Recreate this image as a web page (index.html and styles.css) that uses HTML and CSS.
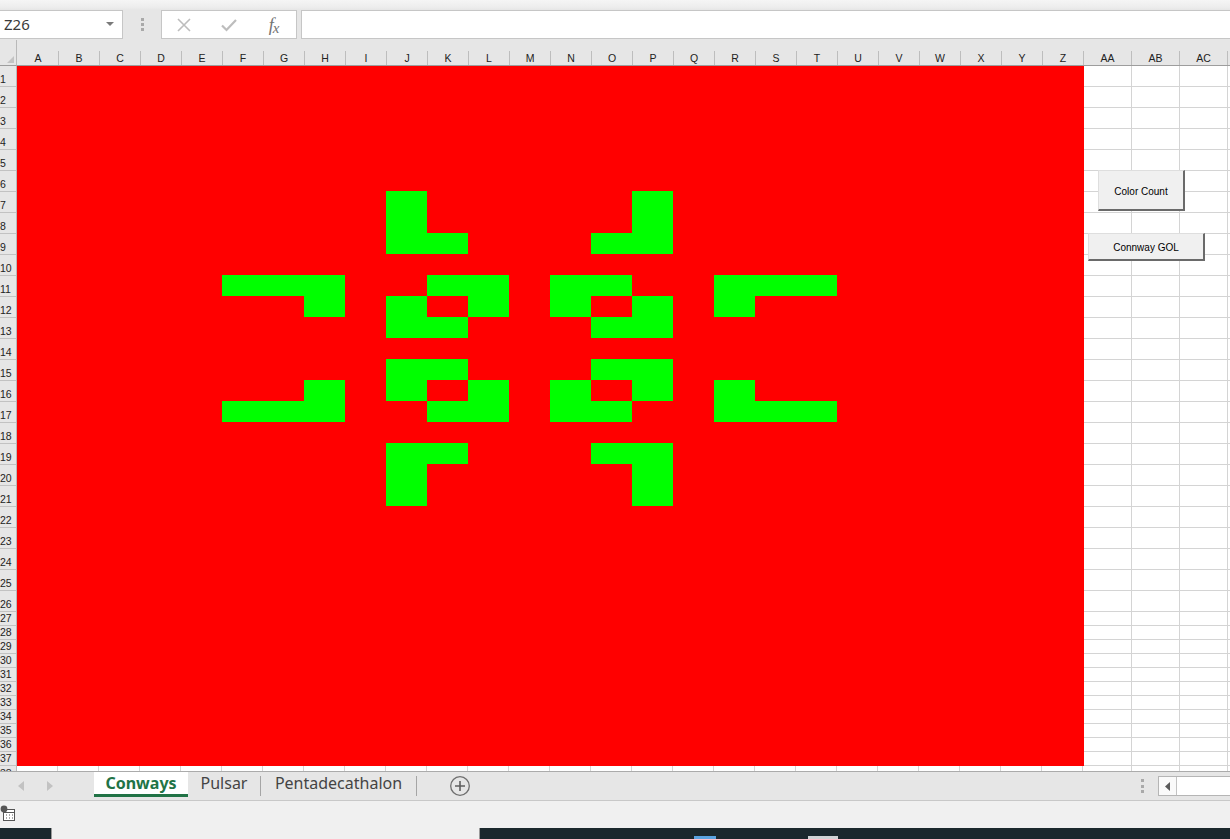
FILE: index.html
```html
<!DOCTYPE html>
<html lang="en">
<head>
<meta charset="utf-8">
<title>Conways - Excel</title>
<link rel="stylesheet" href="styles.css">
</head>
<body>
<div class="app">
  <header class="topbar">
    <div class="namebox">
      <span class="name">Z26</span>
      <svg class="dd" width="8" height="5" viewBox="0 0 8 5"><polygon points="0,0 8,0 4,4" fill="#7a7a7a"/></svg>
    </div>
    <div class="grip"><i></i><i></i><i></i></div>
    <div class="fnbox">
      <span class="fnicon"><svg width="16" height="16" viewBox="0 0 16 16"><path d="M2 2 L14 14 M14 2 L2 14" stroke="#bdbdbd" stroke-width="1.6" fill="none"/></svg></span>
      <span class="fnicon"><svg width="18" height="16" viewBox="0 0 18 16"><path d="M2 8.5 L6.5 13 L16 3" stroke="#bdbdbd" stroke-width="2.2" fill="none"/></svg></span>
      <span class="fnicon"><span class="fx">f<span class="fxx">x</span></span></span>
    </div>
    <div class="formula"></div>
  </header>

  <section class="sheet">
    <div class="corner"><svg width="8" height="8" viewBox="0 0 8 8"><polygon points="7,0 7,7 0,7" fill="#c3c3c3"/></svg></div>
    <div class="colheads">
      <div class="ch">A</div><div class="ch">B</div><div class="ch">C</div><div class="ch">D</div><div class="ch">E</div>
      <div class="ch">F</div><div class="ch">G</div><div class="ch">H</div><div class="ch">I</div><div class="ch">J</div>
      <div class="ch">K</div><div class="ch">L</div><div class="ch">M</div><div class="ch">N</div><div class="ch">O</div>
      <div class="ch">P</div><div class="ch">Q</div><div class="ch">R</div><div class="ch">S</div><div class="ch">T</div>
      <div class="ch">U</div><div class="ch">V</div><div class="ch">W</div><div class="ch">X</div><div class="ch">Y</div>
      <div class="ch">Z</div><div class="ch">AA</div><div class="ch">AB</div><div class="ch">AC</div><div class="ch last"></div>
    </div>
    <div class="rowheads">
      <div class="rh">1</div><div class="rh">2</div><div class="rh">3</div><div class="rh">4</div><div class="rh">5</div>
      <div class="rh">6</div><div class="rh">7</div><div class="rh">8</div><div class="rh">9</div><div class="rh">10</div>
      <div class="rh">11</div><div class="rh">12</div><div class="rh">13</div><div class="rh">14</div><div class="rh">15</div>
      <div class="rh">16</div><div class="rh">17</div><div class="rh">18</div><div class="rh">19</div><div class="rh">20</div>
      <div class="rh">21</div><div class="rh">22</div><div class="rh">23</div><div class="rh">24</div><div class="rh">25</div>
      <div class="rh">26</div><div class="rh sm">27</div><div class="rh sm">28</div><div class="rh sm">29</div><div class="rh sm">30</div>
      <div class="rh sm">31</div><div class="rh sm">32</div><div class="rh sm">33</div><div class="rh sm">34</div><div class="rh sm">35</div>
      <div class="rh sm">36</div><div class="rh sm">37</div><div class="rh sm top">38</div>
    </div>
    <div class="body">
      <div class="red">
        <div class="g g1"></div><div class="g g2"></div><div class="g g3"></div><div class="g g4"></div>
        <div class="g g5"></div><div class="g g6"></div><div class="g g7"></div><div class="g g8"></div>
        <div class="g g9"></div><div class="g g10"></div><div class="g g11"></div><div class="g g12"></div>
        <div class="g g13"></div><div class="g g14"></div><div class="g g15"></div><div class="g g16"></div>
        <div class="g g17"></div><div class="g g18"></div><div class="g g19"></div><div class="g g20"></div>
        <div class="g g21"></div><div class="g g22"></div><div class="g g23"></div><div class="g g24"></div>
        <div class="g g25"></div><div class="g g26"></div><div class="g g27"></div><div class="g g28"></div>
        <div class="g g29"></div><div class="g g30"></div><div class="g g31"></div><div class="g g32"></div>
      </div>
      <div class="white-top"></div>
      <div class="white-bottom"></div>
      <div class="strip"></div>
    </div>
    <button class="xlbtn btn-count">Color Count</button>
    <button class="xlbtn btn-gol">Connway GOL</button>
  </section>

  <footer class="tabbar">
    <div class="nav">
      <svg width="6" height="10" viewBox="0 0 6 10"><polygon points="6,0 6,10 0,5" fill="#c2c2c2"/></svg>
      <svg width="6" height="10" viewBox="0 0 6 10"><polygon points="0,0 0,10 6,5" fill="#c2c2c2"/></svg>
    </div>
    <div class="tab active">Conways</div>
    <div class="tab t-pulsar">Pulsar</div>
    <div class="tsep"></div>
    <div class="tab t-penta">Pentadecathalon</div>
    <div class="tsep"></div>
    <div class="addsheet">
      <svg width="22" height="22" viewBox="0 0 22 22"><circle cx="11" cy="11" r="9.3" fill="none" stroke="#6f6f6f" stroke-width="1.3"/><path d="M11 6 V16 M6 11 H16" stroke="#5f5f5f" stroke-width="1.6"/></svg>
    </div>
    <div class="spacer"></div>
    <div class="rgrip"><i></i><i></i><i></i></div>
    <div class="hscroll">
      <div class="hbtn"><svg width="5" height="9" viewBox="0 0 5 9"><polygon points="5,0 5,9 0,4.5" fill="#5a5a5a"/></svg></div>
      <div class="htrack"></div>
    </div>
  </footer>

  <div class="statusbar">
    <svg class="macro" width="16" height="17" viewBox="0 0 16 17">
      <rect x="3.5" y="4.5" width="11" height="11" fill="#fff" stroke="#555"/>
      <path d="M3.5 7.5 H14.5" stroke="#555"/>
      <path d="M6 10 h1 M9 10 h1 M12 10 h1 M6 13 h1 M9 13 h1 M12 13 h1" stroke="#555"/>
      <circle cx="4" cy="4" r="3.4" fill="#555"/>
    </svg>
  </div>

  <div class="taskbar">
    <div class="search"></div>
    <div class="tb-a"></div>
    <div class="tb-b"></div>
  </div>
</div>
</body>
</html>
```

FILE: styles.css
```css
html, body {
  margin: 0;
  padding: 0;
}

body {
  width: 1230px;
  height: 839px;
  overflow: hidden;
  background: #e6e6e6;
  font-family: "Noto Sans", "Open Sans", sans-serif;
}

.app {
  display: flex;
  flex-direction: column;
  width: 1230px;
  height: 839px;
}

/* ---------- formula bar ---------- */
.topbar {
  height: 40px;
  box-sizing: border-box;
  padding-top: 10px;
  display: flex;
  align-items: flex-start;
  background: linear-gradient(#f5f5f5 0, #ededed 7px, #e6e6e6 10px);
  flex: none;
}

.namebox {
  width: 123px;
  height: 29px;
  box-sizing: border-box;
  border: 1px solid #c6c6c6;
  border-left: none;
  background: #fff;
  display: flex;
  align-items: center;
  justify-content: space-between;
  padding: 0 8px 0 4px;
}

.name {
  font-size: 15px;
  color: #3a3a3a;
  line-height: 1;
}

.dd {
  display: block;
}

.grip {
  width: 38px;
  height: 29px;
  display: flex;
  flex-direction: column;
  align-items: center;
  justify-content: center;
  gap: 2px;
}

.grip i, .rgrip i {
  display: block;
  width: 3px;
  height: 3px;
  background: #a9a9a9;
}

.fnbox {
  width: 136px;
  height: 29px;
  box-sizing: border-box;
  border: 1px solid #c6c6c6;
  background: #fff;
  display: flex;
  align-items: center;
}

.fnicon {
  width: 45px;
  height: 27px;
  display: flex;
  align-items: center;
  justify-content: center;
}

.fnicon svg {
  display: block;
}

.fx {
  font-family: "Liberation Serif", "DejaVu Serif", serif;
  font-style: italic;
  font-size: 18px;
  color: #737373;
  line-height: 1;
  letter-spacing: -1px;
}

.fxx {
  font-size: 15px;
  position: relative;
  top: 2px;
}

.formula {
  flex: 1;
  margin-left: 4px;
  height: 29px;
  box-sizing: border-box;
  border: 1px solid #c6c6c6;
  border-right: none;
  background: #fff;
}

/* ---------- sheet ---------- */
.sheet {
  position: relative;
  height: 731px;
  flex: none;
  overflow: hidden;
  display: grid;
  grid-template-columns: 17px 1fr;
  grid-template-rows: 26px 1fr;
  font-family: "Liberation Sans", Arial, sans-serif;
}

.corner {
  box-sizing: border-box;
  border-right: 1px solid #b9b9b9;
  border-bottom: 1px solid #9d9d9d;
  display: flex;
  align-items: flex-end;
  justify-content: flex-end;
  padding: 0 1px 1px 0;
}

.corner svg {
  display: block;
}

.colheads {
  box-sizing: border-box;
  padding-top: 11px;
  border-bottom: 1px solid #9d9d9d;
  display: grid;
  grid-template-columns: 42px repeat(25, 41px) repeat(3, 48px) 1fr;
}

.ch {
  box-sizing: border-box;
  border-right: 1px solid #bdbdbd;
  font-size: 10.5px;
  color: #222;
  display: flex;
  align-items: center;
  justify-content: center;
  line-height: 14px;
}

.ch:first-child {
  padding-left: 1px;
}

.ch.last {
  border-right: none;
}

.rowheads {
  box-sizing: border-box;
  border-right: 1px solid #b9b9b9;
  display: grid;
  grid-template-rows: repeat(26, 21px) repeat(12, 14px);
  overflow: hidden;
}

.rh {
  box-sizing: border-box;
  border-bottom: 1px solid #c2c2c2;
  font-size: 10.5px;
  color: #222;
  display: flex;
  align-items: flex-end;
  padding: 0 0 1px 0;
  line-height: 12px;
  overflow: hidden;
}

.rh.sm {
  padding-bottom: 0;
  line-height: 13px;
}

.rh.top {
  align-items: flex-start;
  padding-top: 1px;
}

.body {
  display: grid;
  grid-template-columns: 1067px 1fr;
  grid-template-rows: 546px 154px 14px;
}

.red {
  grid-column: 1;
  grid-row: 1 / 3;
  background: #ff0000;
  display: grid;
  grid-template-columns: repeat(26, 41px);
  grid-template-rows: 20px repeat(25, 21px) repeat(11, 14px);
}

.white-top {
  grid-column: 2;
  grid-row: 1;
  background-color: #fff;
  background-image:
    repeating-linear-gradient(90deg, transparent 0 47px, #d4d4d4 47px 48px),
    repeating-linear-gradient(180deg, transparent 0 20px, #d4d4d4 20px 21px);
}

.white-bottom {
  grid-column: 2;
  grid-row: 2 / 4;
  background-color: #fff;
  background-image:
    repeating-linear-gradient(90deg, transparent 0 47px, #d4d4d4 47px 48px),
    repeating-linear-gradient(180deg, transparent 0 13px, #d4d4d4 13px 14px);
}

.strip {
  grid-column: 1;
  grid-row: 3;
  background-color: #fff;
  background-image: repeating-linear-gradient(90deg, transparent 0 41px, #d4d4d4 41px 42px, transparent 42px 42px);
  background-size: 1067px 14px;
  background-image: repeating-linear-gradient(90deg, transparent 0 40px, #d4d4d4 40px 41px);
}

/* green live cells: row-start / col-start / row-end / col-end */
.g { background: #00ff00; }
.g1  { grid-area: 7 / 10 / 10 / 11; }
.g2  { grid-area: 9 / 11 / 10 / 12; }
.g3  { grid-area: 7 / 16 / 10 / 17; }
.g4  { grid-area: 9 / 15 / 10 / 16; }
.g5  { grid-area: 11 / 6 / 12 / 9; }
.g6  { grid-area: 12 / 8 / 13 / 9; }
.g7  { grid-area: 11 / 11 / 12 / 13; }
.g8  { grid-area: 12 / 10 / 14 / 11; }
.g9  { grid-area: 12 / 12 / 13 / 13; }
.g10 { grid-area: 13 / 11 / 14 / 12; }
.g11 { grid-area: 11 / 14 / 12 / 16; }
.g12 { grid-area: 12 / 14 / 13 / 15; }
.g13 { grid-area: 12 / 16 / 14 / 17; }
.g14 { grid-area: 13 / 15 / 14 / 16; }
.g15 { grid-area: 11 / 18 / 12 / 21; }
.g16 { grid-area: 12 / 18 / 13 / 19; }
.g17 { grid-area: 15 / 10 / 16 / 12; }
.g18 { grid-area: 16 / 10 / 17 / 11; }
.g19 { grid-area: 16 / 12 / 18 / 13; }
.g20 { grid-area: 17 / 11 / 18 / 12; }
.g21 { grid-area: 15 / 15 / 16 / 17; }
.g22 { grid-area: 16 / 16 / 17 / 17; }
.g23 { grid-area: 16 / 14 / 18 / 15; }
.g24 { grid-area: 17 / 15 / 18 / 16; }
.g25 { grid-area: 16 / 8 / 18 / 9; }
.g26 { grid-area: 17 / 6 / 18 / 8; }
.g27 { grid-area: 16 / 18 / 18 / 19; }
.g28 { grid-area: 17 / 19 / 18 / 21; }
.g29 { grid-area: 19 / 10 / 20 / 12; }
.g30 { grid-area: 20 / 10 / 22 / 11; }
.g31 { grid-area: 19 / 15 / 20 / 17; }
.g32 { grid-area: 20 / 16 / 22 / 17; }

/* floating form buttons */
.xlbtn {
  position: absolute;
  box-sizing: border-box;
  margin: 0;
  padding: 0;
  background: #f0f0f0;
  border-top: 1px solid #dedede;
  border-left: 1px solid #dedede;
  border-right: 2px solid #6a6a6a;
  border-bottom: 2px solid #6a6a6a;
  font-family: "Liberation Sans", Arial, sans-serif;
  font-size: 10px;
  color: #000;
  display: flex;
  align-items: center;
  justify-content: center;
  padding-top: 2px;
}

.btn-count {
  left: 1098px;
  top: 130px;
  width: 87px;
  height: 41px;
}

.btn-gol {
  left: 1088px;
  top: 193px;
  width: 117px;
  height: 28px;
}

/* ---------- sheet tabs ---------- */
.tabbar {
  flex: none;
  height: 30px;
  box-sizing: border-box;
  border-top: 1px solid #ababab;
  border-bottom: 1px solid #c8c8c8;
  background: #e6e6e6;
  display: flex;
  align-items: flex-start;
}

.nav {
  width: 94px;
  height: 28px;
  display: flex;
  align-items: center;
  padding-left: 18px;
  box-sizing: border-box;
  gap: 23px;
}

.nav svg {
  display: block;
}

.tab {
  height: 25px;
  box-sizing: border-box;
  display: flex;
  align-items: center;
  justify-content: center;
  font-size: 16px;
  color: #444;
  padding-bottom: 3px;
}

.tab.active {
  width: 94px;
  background: #fff;
  color: #217346;
  font-weight: 700;
  border-bottom: 3px solid #217346;
  padding-bottom: 1px;
}

.t-pulsar {
  width: 72px;
}

.t-penta {
  width: 155px;
}

.tsep {
  width: 1px;
  height: 20px;
  margin-top: 4px;
  background: #a5a5a5;
}

.addsheet {
  margin-left: 32px;
  height: 28px;
  display: flex;
  align-items: center;
}

.addsheet svg {
  display: block;
}

.spacer {
  flex: 1;
}

.rgrip {
  height: 28px;
  display: flex;
  flex-direction: column;
  justify-content: center;
  gap: 2.5px;
  margin-right: 14px;
}

.hscroll {
  width: 72px;
  height: 20px;
  margin-top: 4px;
  box-sizing: border-box;
  border: 1px solid #b5b5b5;
  border-right: none;
  background: #fff;
  display: flex;
}

.hbtn {
  width: 18px;
  box-sizing: border-box;
  border-right: 1px solid #c3c3c3;
  display: flex;
  align-items: center;
  justify-content: center;
  background: #fafafa;
}

.hbtn svg {
  display: block;
}

.htrack {
  flex: 1;
}

/* ---------- status bar ---------- */
.statusbar {
  flex: none;
  height: 27px;
  background: #f0f0f0;
  display: flex;
  align-items: flex-start;
}

.macro {
  display: block;
  margin-top: 4px;
}

/* ---------- taskbar ---------- */
.taskbar {
  flex: 1;
  background: #1b282d;
  display: flex;
}

.search {
  margin-left: 51px;
  width: 429px;
  background: #f0f0f0;
  border-left: 1px solid #9a9a9a;
  border-right: 1px solid #9a9a9a;
  box-sizing: border-box;
}

.tb-a {
  margin-left: 214px;
  width: 22px;
  height: 3px;
  margin-top: 8px;
  background: #5aa3e0;
}

.tb-b {
  margin-left: 92px;
  width: 30px;
  height: 3px;
  margin-top: 8px;
  background: #cfd3d5;
}
```
